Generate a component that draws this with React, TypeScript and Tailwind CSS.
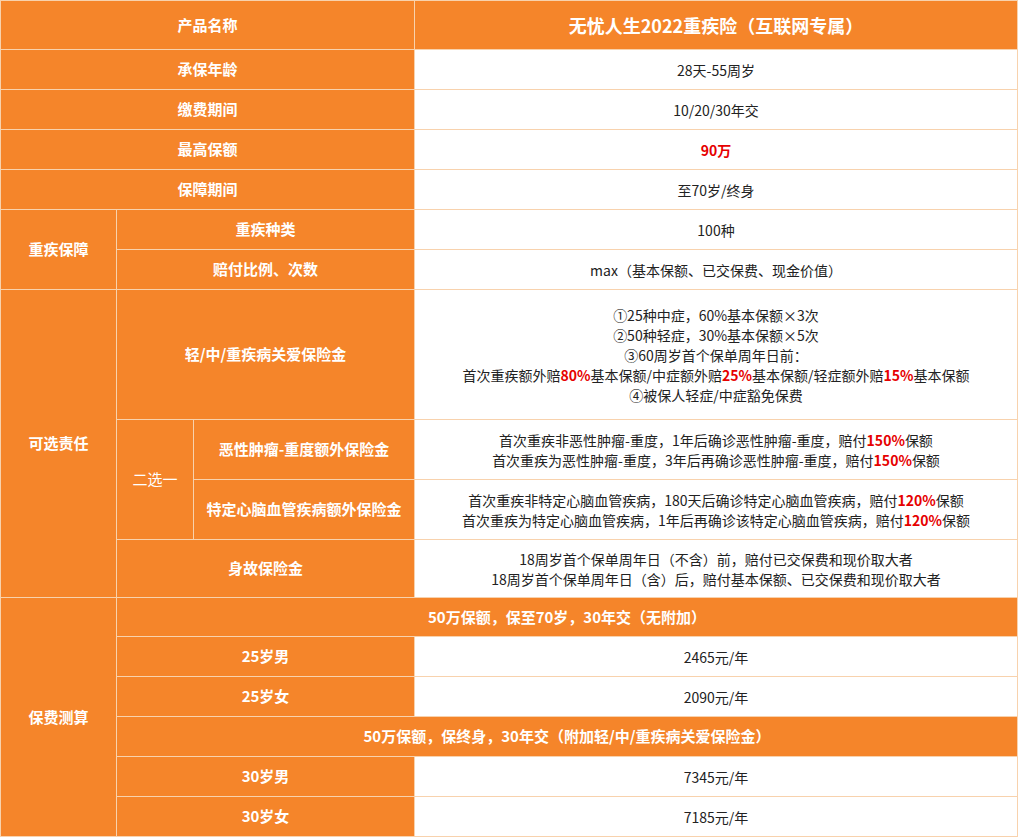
import React from "react";

const O = "bg-[#f5852a] text-white font-bold text-[15px] flex items-center justify-center text-center";
const W = "bg-white text-[#222] text-[14px] flex flex-col items-center justify-center text-center leading-[20px]";
const R = ({ c }: { c: string }) => <span className="text-[#e60000] font-bold">{c}</span>;

export default function App() {
  return (
    <div className="w-[1018px] h-[837px] bg-white" style={{ fontFamily: '"Noto Sans CJK SC", "Noto Sans", sans-serif' }}>
      <div className="grid grid-cols-[115px_76px_220px_1fr] grid-rows-[48px_39px_39px_39px_39px_39px_39px_129px_59px_59px_57px_38px_39px_39px_39px_39px_39px] gap-px bg-[#f8d2ad] p-px w-[1018px]">
        <div className={`${O} col-span-3`}>产品名称</div>
        <div className={`${O} text-[18px]`}>无忧人生2022重疾险（互联网专属）</div>
        <div className={`${O} col-span-3`}>承保年龄</div>
        <div className={W}>28天-55周岁</div>
        <div className={`${O} col-span-3`}>缴费期间</div>
        <div className={W}>10/20/30年交</div>
        <div className={`${O} col-span-3`}>最高保额</div>
        <div className={W}><R c="90万" /></div>
        <div className={`${O} col-span-3`}>保障期间</div>
        <div className={W}>至70岁/终身</div>

        <div className={`${O} row-span-2`}>重疾保障</div>
        <div className={`${O} col-span-2`}>重疾种类</div>
        <div className={W}>100种</div>
        <div className={`${O} col-span-2`}>赔付比例、次数</div>
        <div className={W}>max（基本保额、已交保费、现金价值）</div>

        <div className={`${O} row-span-4`}>可选责任</div>
        <div className={`${O} col-span-2`}>轻/中/重疾病关爱保险金</div>
        <div className={W}>
          <div>①25种中症，60%基本保额×3次</div>
          <div>②50种轻症，30%基本保额×5次</div>
          <div>③60周岁首个保单周年日前：</div>
          <div>首次重疾额外赔<R c="80%" />基本保额/中症额外赔<R c="25%" />基本保额/轻症额外赔<R c="15%" />基本保额</div>
          <div>④被保人轻症/中症豁免保费</div>
        </div>
        <div className={`${O} row-span-2 !font-normal`}>二选一</div>
        <div className={O}>恶性肿瘤-重度额外保险金</div>
        <div className={W}>
          <div>首次重疾非恶性肿瘤-重度，1年后确诊恶性肿瘤-重度，赔付<R c="150%" />保额</div>
          <div>首次重疾为恶性肿瘤-重度，3年后再确诊恶性肿瘤-重度，赔付<R c="150%" />保额</div>
        </div>
        <div className={O}>特定心脑血管疾病额外保险金</div>
        <div className={W}>
          <div>首次重疾非特定心脑血管疾病，180天后确诊特定心脑血管疾病，赔付<R c="120%" />保额</div>
          <div>首次重疾为特定心脑血管疾病，1年后再确诊该特定心脑血管疾病，赔付<R c="120%" />保额</div>
        </div>
        <div className={`${O} col-span-2`}>身故保险金</div>
        <div className={W}>
          <div>18周岁首个保单周年日（不含）前，赔付已交保费和现价取大者</div>
          <div>18周岁首个保单周年日（含）后，赔付基本保额、已交保费和现价取大者</div>
        </div>

        <div className={`${O} row-span-6`}>保费测算</div>
        <div className={`${O} col-span-3`}>50万保额，保至70岁，30年交（无附加）</div>
        <div className={`${O} col-span-2`}>25岁男</div>
        <div className={W}>2465元/年</div>
        <div className={`${O} col-span-2`}>25岁女</div>
        <div className={W}>2090元/年</div>
        <div className={`${O} col-span-3`}>50万保额，保终身，30年交（附加轻/中/重疾病关爱保险金）</div>
        <div className={`${O} col-span-2`}>30岁男</div>
        <div className={W}>7345元/年</div>
        <div className={`${O} col-span-2`}>30岁女</div>
        <div className={W}>7185元/年</div>
      </div>
    </div>
  );
}
